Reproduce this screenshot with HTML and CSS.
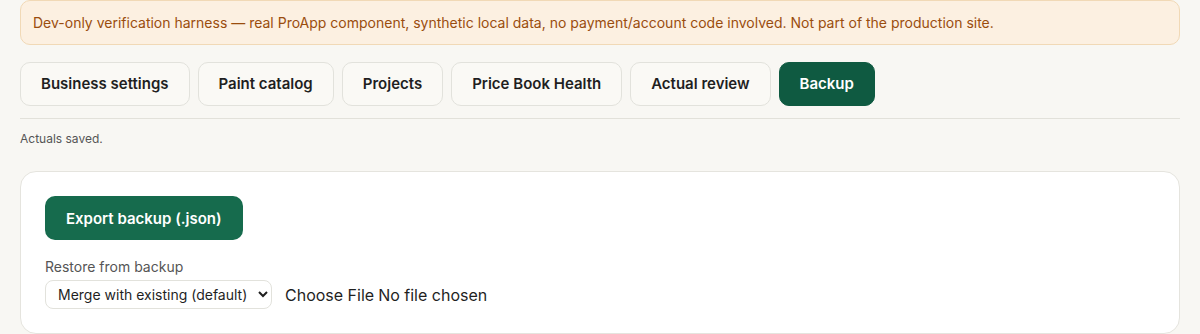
FILE: index.html
```html
<!DOCTYPE html>
<html lang="en">
<head>
<meta charset="utf-8">
<title>Backup</title>
<link rel="stylesheet" href="styles.css">
</head>
<body>
<div class="page">
  <div class="banner">Dev-only verification harness — real ProApp component, synthetic local data, no payment/account code involved. Not part of the production site.</div>
  <nav class="tabs">
    <button class="tab">Business settings</button>
    <button class="tab">Paint catalog</button>
    <button class="tab">Projects</button>
    <button class="tab">Price Book Health</button>
    <button class="tab">Actual review</button>
    <button class="tab active">Backup</button>
  </nav>
  <p class="status">Actuals saved.</p>
  <section class="card">
    <button class="primary">Export backup (.json)</button>
    <div class="restore">
      <label class="label">Restore from backup</label>
      <div class="row">
        <select class="select">
          <option>Merge with existing (default)</option>
          <option>Replace existing</option>
        </select>
        <input class="file" type="file" accept=".json">
      </div>
    </div>
  </section>
</div>
</body>
</html>
```
FILE: styles.css
```css
* { box-sizing: border-box; }
html, body { margin: 0; padding: 0; }
body {
  background: #f8f7f3;
  font-family: Inter, "Noto Sans", sans-serif;
  color: #1f1f1f;
}
.page {
  padding: 0 20px;
}
.banner {
  background: #fcf0e1;
  border: 1px solid #f1d9b6;
  border-radius: 10px;
  color: #9a4d0e;
  font-size: 14px;
  line-height: 20px;
  padding: 12px 12px;
  height: 45px;
}
.tabs {
  display: flex;
  gap: 8px;
  margin-top: 17px;
  padding-bottom: 12px;
  border-bottom: 1px solid #e2e1da;
}
.tab {
  height: 44px;
  padding: 0 20px 1px;
  border: 1px solid #e2e2dc;
  border-radius: 10px;
  background: #faf9f5;
  font-family: inherit;
  font-size: 15px;
  font-weight: 600;
  color: #1f1f1f;
}
.tab.active {
  background: #0f5a41;
  border-color: #0f5a41;
  color: #fff;
}
.status {
  margin: 12px 0 0;
  font-size: 12px;
  line-height: 16px;
  color: #555;
}
.card {
  margin-top: 24px;
  background: #fff;
  border: 1px solid #e5e4de;
  border-radius: 16px;
  padding: 24px;
  height: 163px;
}
.primary {
  height: 44px;
  padding: 0 21px;
  border: 0;
  border-radius: 10px;
  background: #166b4d;
  color: #fff;
  font-family: inherit;
  font-size: 15px;
  font-weight: 600;
}
.restore {
  margin-top: 17px;
  display: flex;
  flex-direction: column;
  gap: 4px;
}
.label {
  font-size: 14px;
  line-height: 19px;
  color: #555;
}
.row {
  display: flex;
  align-items: center;
  gap: 13px;
}
.select {
  height: 29px;
  width: 227px;
  padding: 0 6px 0 8px;
  border: 1px solid #e2e2dc;
  border-radius: 8px;
  background: #fff;
  font-family: inherit;
  font-size: 14px;
  color: #1f1f1f;
}
.file {
  font-family: inherit;
  font-size: 16px;
  color: #1f1f1f;
}
.file::file-selector-button {
  border: 0;
  background: none;
  padding: 0;
  margin-right: 4px;
  font: inherit;
  color: inherit;
}
```
